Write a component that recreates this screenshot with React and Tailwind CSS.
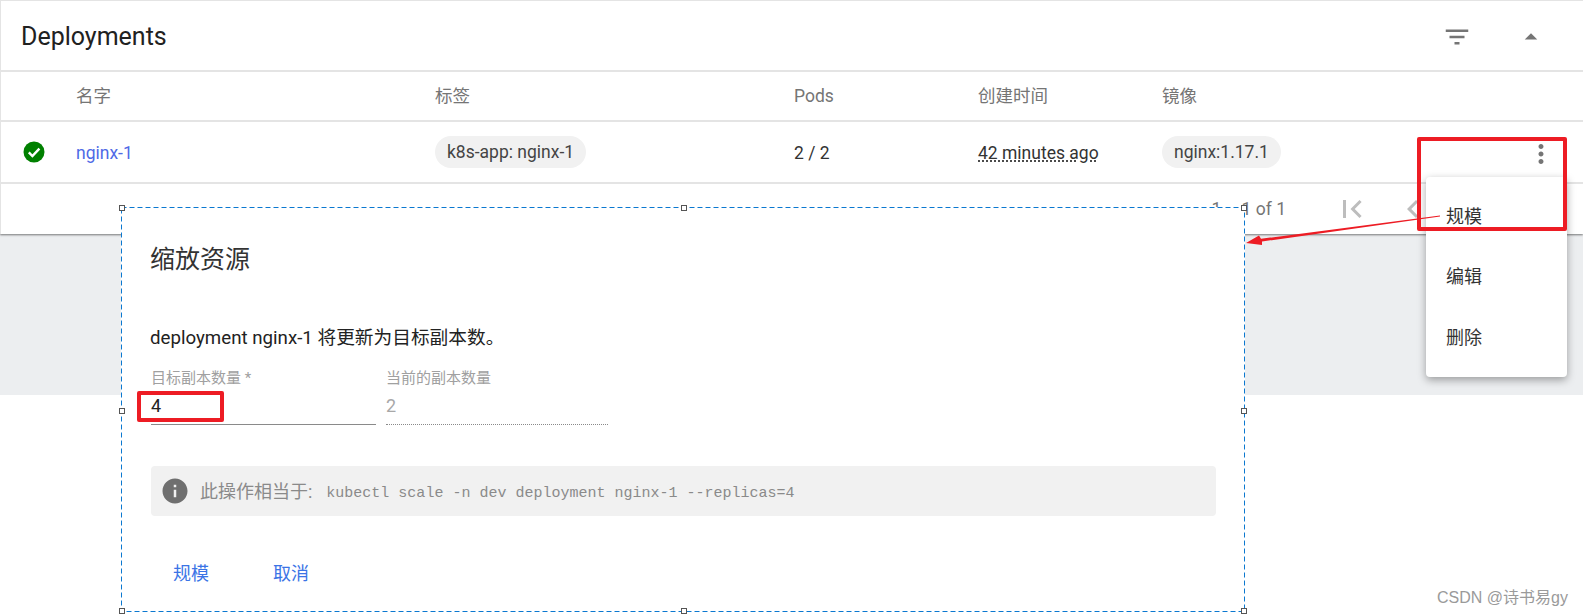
import React from 'react';

const rowCols = 'grid grid-cols-[75px_359px_359px_184px_184px_1fr] items-center';

function MatIcon({ d, size = 30, className = '' }) {
  return (
    <svg width={size} height={size} viewBox="0 0 24 24" fill="currentColor" className={className}>
      <path d={d} />
    </svg>
  );
}

const FILTER = 'M10 18h4v-2h-4v2zM3 6v2h18V6H3zm3 7h12v-2H6v2z';
const DROP_UP = 'M7 14l5-5 5 5z';
const MORE = 'M12 8c1.1 0 2-.9 2-2s-.9-2-2-2-2 .9-2 2 .9 2 2 2zm0 2c-1.1 0-2 .9-2 2s.9 2 2 2 2-.9 2-2-.9-2-2-2zm0 6c-1.1 0-2 .9-2 2s.9 2 2 2 2-.9 2-2-.9-2-2-2z';
const FIRST = 'M18.41 16.59L13.82 12l4.59-4.59L17 6l-6 6 6 6zM6 6h2v12H6z';
const PREV = 'M15.41 7.41L14 6l-6 6 6 6 1.41-1.41L10.83 12z';
const NEXT = 'M10 6L8.59 7.41 13.17 12l-4.58 4.59L10 18l6-6z';
const LAST = 'M5.59 7.41L10.18 12l-4.59 4.59L7 18l6-6-6-6zM16 6h2v12h-2z';
const INFO = 'M12 2C6.48 2 2 6.48 2 12s4.48 10 10 10 10-4.48 10-10S17.52 2 12 2zm1 15h-2v-6h2v6zm0-8h-2V7h2v2z';

function Handle({ className }) {
  return <span className={`absolute w-[6px] h-[6px] bg-white border border-[#555555] ${className}`} />;
}

export default function App() {
  return (
    <div className="relative w-[1583px] h-[616px] overflow-hidden bg-white text-[17.5px] font-['Roboto','Noto_Sans_CJK_SC',sans-serif] text-[#333333]">
      <div className="h-[395px] bg-[#eceef0]">
        <div className="h-[234px] bg-white border-t border-l border-[#e4e4e4] shadow-[0_1px_2px_rgba(0,0,0,0.5)]">
          <div className="h-[71px] flex items-center justify-between border-b-2 border-[#e4e4e4]">
            <h2 className="pl-[20px] pt-[2px] text-[25px] font-normal text-[#212121]">Deployments</h2>
            <div className="flex items-center text-[#757575] pt-[2px]">
              <MatIcon d={FILTER} />
              <MatIcon d={DROP_UP} className="ml-[44px] mr-[37px]" />
            </div>
          </div>
          <div className={`${rowCols} h-[50px] pt-[1px] border-b-2 border-[#e4e4e4] text-[#757575]`}>
            <span />
            <span>名字</span>
            <span>标签</span>
            <span>Pods</span>
            <span>创建时间</span>
            <span>镜像</span>
          </div>
          <div className={`${rowCols} h-[62px] border-b-2 border-[#e4e4e4]`}>
            <span className="pl-[22px] flex">
              <svg width="22" height="22" viewBox="0 0 22 22">
                <circle cx="11" cy="11" r="10.5" fill="#008000" />
                <path d="M5.8 11.4l3.6 3.6 7-7.4" fill="none" stroke="#ffffff" strokeWidth="2.4" />
              </svg>
            </span>
            <a className="text-[#4f6ae6] pt-[2px]">nginx-1</a>
            <span>
              <span className="inline-flex items-center h-[32px] px-[12px] pt-[1px] rounded-full bg-[#f1f1f1] text-[#444444]">k8s-app: nginx-1</span>
            </span>
            <span className="text-[#333333] pt-[2px]">2 / 2</span>
            <span className="pt-[2px] underline decoration-dotted underline-offset-2 whitespace-nowrap">42 minutes ago</span>
            <span className="whitespace-nowrap">
              <span className="inline-flex items-center h-[32px] px-[12px] pt-[1px] rounded-full bg-[#f1f1f1] text-[#444444]">nginx:1.17.1</span>
            </span>
          </div>
          <div className="h-[50px] flex items-center justify-end pr-[30px] text-[#bdbdbd]">
            <span className="mr-[48px] text-[#757575]">1 – 1 of 1</span>
            <MatIcon d={FIRST} size={36} />
            <MatIcon d={PREV} size={36} className="ml-[25px]" />
            <MatIcon d={NEXT} size={36} className="ml-[25px]" />
            <MatIcon d={LAST} size={36} className="ml-[25px]" />
          </div>
        </div>
      </div>

      {/* pasted dialog on top of the page */}
      <div className="absolute left-[121px] top-[207px] w-[1124px] h-[405px] bg-white pl-[30px] pr-[29px] pt-[1px]">
        <svg className="absolute left-0 top-0" width="1124" height="405">
          <rect x="0.5" y="0.5" width="1123" height="404" fill="none" stroke="#0b78d0" strokeDasharray="5 3" />
        </svg>
        <Handle className="-left-[2px] -top-[2px]" />
        <Handle className="left-[560px] -top-[2px]" />
        <Handle className="-right-[2px] -top-[2px]" />
        <Handle className="-left-[2px] top-[201px]" />
        <Handle className="-right-[2px] top-[201px]" />
        <Handle className="-left-[2px] -bottom-[2px]" />
        <Handle className="left-[560px] -bottom-[2px]" />
        <Handle className="-right-[2px] -bottom-[2px]" />

        <h3 className="relative mt-[34px] -ml-[1px] text-[25px] leading-[36px] font-normal text-[#333333]">缩放资源</h3>
        <p className="relative mt-[47px] -ml-[1px] text-[18.7px] leading-[26px] text-[#222222]">deployment nginx-1 将更新为目标副本数。</p>
        <div className="relative mt-[18px] flex gap-[10px]">
          <div className="w-[225px] h-[56px] border-b border-[#8a8a8a]">
            <div className="text-[15px] leading-[18px] text-[#a0a0a0]">目标副本数量 *</div>
            <div className="mt-[7px] text-[18px] leading-[24px] text-[#222222]">4</div>
          </div>
          <div className="w-[222px] h-[56px] border-b border-dotted border-[#8a8a8a]">
            <div className="text-[15px] leading-[18px] text-[#a0a0a0]">当前的副本数量</div>
            <div className="mt-[7px] text-[18px] leading-[24px] text-[#a8a8a8]">2</div>
          </div>
        </div>
        <div className="relative mt-[41px] h-[50px] flex items-center rounded-sm bg-[#f1f1f1] pl-[11px] text-[#8a8a8a]">
          <MatIcon d={INFO} size={30} className="text-[#6f6f6f] -ml-[2px]" />
          <span className="ml-[10px] text-[18px]">此操作相当于:</span>
          <span className="ml-[14px] pt-[6px] text-[15px] font-['Liberation_Mono',monospace]">kubectl scale -n dev deployment nginx-1 --replicas=4</span>
        </div>
        <div className="relative mt-[44px] flex pl-[22px] gap-[64px] text-[18px] text-[#3b74e6]">
          <span>规模</span>
          <span>取消</span>
        </div>
      </div>

      {/* row action menu */}
      <div className="absolute left-[1426px] top-[177px] w-[141px] h-[200px] rounded-[4px] bg-white shadow-[0_3px_8px_rgba(0,0,0,0.35)] py-[8px] text-[18px] text-[#333333]">
        <div className="h-[61px] pt-[2px] flex items-center pl-[20px]">规模</div>
        <div className="h-[61px] flex items-center pl-[20px]">编辑</div>
        <div className="h-[60px] flex items-center pl-[20px]">删除</div>
      </div>

      <MatIcon d={MORE} className="absolute left-[1526px] top-[139px] text-[#757575]" />

      {/* red annotations */}
      <div className="absolute left-[1417px] top-[137px] w-[150px] h-[94px] border-4 border-[#ed1c24] rounded-[2px]" />
      <div className="absolute left-[137px] top-[391px] w-[87px] h-[31px] border-4 border-[#ed1c24] rounded-[2px]" />
      <svg className="absolute left-[1240px] top-[210px]" width="205" height="40" viewBox="0 0 205 40">
        <polygon points="200,5.5 200,6.5 22,31.5 22,35 6,33 19,25.5 21,28.8" fill="#ed1c24" />
      </svg>

      <div className="absolute left-[1437px] top-[588px] text-[16px] leading-[20px] text-[#9a9a9a] font-['Liberation_Sans','Noto_Sans_CJK_SC',sans-serif]">CSDN @诗书易gy</div>
    </div>
  );
}
